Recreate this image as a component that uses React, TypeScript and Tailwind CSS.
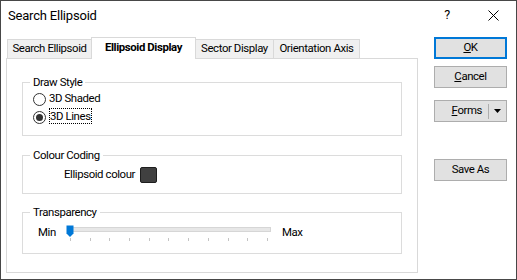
import React from "react";

type Tab = { label: string; width: string; active?: boolean };

const tabs: Tab[] = [
  { label: "Search Ellipsoid", width: "w-[84px]" },
  { label: "Ellipsoid Display", width: "w-[105px]", active: true },
  { label: "Sector Display", width: "w-[78px]" },
  { label: "Orientation Axis", width: "w-[86px]" },
];

function Radio({ checked, label }: { checked?: boolean; label: React.ReactNode }) {
  return (
    <div className="h-[18px] flex items-center">
      <span className="w-[13px] h-[13px] rounded-full border border-[#333333] bg-white flex items-center justify-center">
        {checked && <span className="w-[7px] h-[7px] rounded-full bg-[#333333]" />}
      </span>
      <span className="ml-[3px]">{label}</span>
    </div>
  );
}

function Group({ title, className, children }: { title: string; className: string; children: React.ReactNode }) {
  return (
    <fieldset className={`border border-[#dcdcdc] ${className}`}>
      <legend className="ml-[7px] px-[3px] leading-[15px]">{title}</legend>
      {children}
    </fieldset>
  );
}

function Btn({ children, primary, className = "" }: { children: React.ReactNode; primary?: boolean; className?: string }) {
  return (
    <div
      className={`h-[22px] w-[73px] bg-[#e1e1e1] flex items-center ${
        primary ? "border-2 border-[#0078d7]" : "border border-[#adadad]"
      } ${className}`}
    >
      {children}
    </div>
  );
}

export default function App() {
  const ticks = Array.from({ length: 11 });

  return (
    <div className="w-[517px] h-[280px] border border-[#474747] bg-white flex flex-col text-[11.4px] tracking-[-0.4px] text-black font-['Roboto',sans-serif] overflow-hidden whitespace-nowrap">
      {/* title bar */}
      <div className="h-[29px] flex items-center shrink-0">
        <div className="pl-[7px] flex-1 text-[13px] tracking-[-0.2px]">Search Ellipsoid</div>
        <div className="w-[46px] h-full flex items-center justify-center text-[12.6px]">?</div>
        <div className="w-[46px] h-full flex items-center justify-center">
          <svg width="11" height="11" viewBox="0 0 11 11">
            <path d="M0.5 0.5l10 10M10.5 0.5l-10 10" stroke="#000" strokeWidth="1" />
          </svg>
        </div>
      </div>

      <div className="flex pt-[7px] pl-[5px]">
        {/* tabs + page */}
        <div className="w-[412px] flex flex-col">
          <div className="flex items-end h-[21px] pl-[1px] relative z-10">
            {tabs.map((t, i) =>
              t.active ? (
                <div
                  key={t.label}
                  className={`${t.width} shrink-0 h-[22px] -mb-px bg-white border-t border-l border-r border-[#d9d9d9] flex items-center justify-center font-bold pb-[1px]`}
                >
                  {t.label}
                </div>
              ) : (
                <div
                  key={t.label}
                  className={`${t.width} shrink-0 h-[19px] bg-[#f0f0f0] border-t border-[#d9d9d9] flex items-center justify-center ${
                    i === 0 ? "border-l" : "border-r"
                  }`}
                >
                  {t.label}
                </div>
              )
            )}
          </div>

          <div className="h-[215px] border border-[#d9d9d9] bg-white px-[15px] flex flex-col">
            <Group title="Draw Style" className="mt-[16px] h-[61px]">
              <div className="pl-[10px]">
                <Radio label="3D Shaded" />
                <Radio
                  checked
                  label={<span className="border border-dotted border-black leading-[13px] px-0">3D Lines</span>}
                />
              </div>
            </Group>

            <Group title="Colour Coding" className="mt-[12px] h-[46px]">
              <div className="h-[18px] mt-[3px] pl-[41px] flex items-center">
                <span>Ellipsoid colour</span>
                <span className="ml-[5px] w-[17px] h-[16px] bg-[#404040] border border-[#1e1e1e] rounded-[2px]" />
              </div>
            </Group>

            <Group title="Transparency" className="mt-[11px] h-[49px]">
              <div className="h-[22px] mt-[2px] pl-[15px] flex items-center">
                <span className="w-[28px]">Min</span>
                <div className="relative w-[206px] h-[22px]">
                  <div className="absolute left-[1px] top-[5px] w-[204px] h-[5px] bg-[#e7e7e7] border border-[#d6d6d6]" />
                  <svg className="absolute left-0 top-[3px]" width="8" height="12" viewBox="0 0 8 12">
                    <path d="M0.5 0.5h7v8l-3.5 3.5l-3.5-3.5z" fill="#0078d7" />
                  </svg>
                  <div className="absolute left-[4px] top-[16px] w-[198px] flex justify-between">
                    {ticks.map((_, i) => (
                      <span key={i} className="w-px h-[3px] bg-[#c4c4c4]" />
                    ))}
                  </div>
                </div>
                <span className="ml-[10px]">Max</span>
              </div>
            </Group>
          </div>
        </div>

        {/* buttons */}
        <div className="ml-[16px] w-[73px] flex flex-col">
          <Btn primary className="justify-center">
            <span><u>O</u>K</span>
          </Btn>
          <Btn className="mt-[7px] justify-center">
            <span><u>C</u>ancel</span>
          </Btn>
          <Btn className="mt-[12px] justify-end">
            <span><u>F</u>orms</span>
            <span className="ml-[6px] w-px h-[15px] bg-[#adadad]" />
            <svg className="ml-[5px] mr-[5px]" width="7" height="4" viewBox="0 0 7 4">
              <path d="M0 0h7l-3.5 4z" fill="#000" />
            </svg>
          </Btn>
          <Btn className="mt-[37px] justify-center">Save As</Btn>
        </div>
      </div>
    </div>
  );
}
